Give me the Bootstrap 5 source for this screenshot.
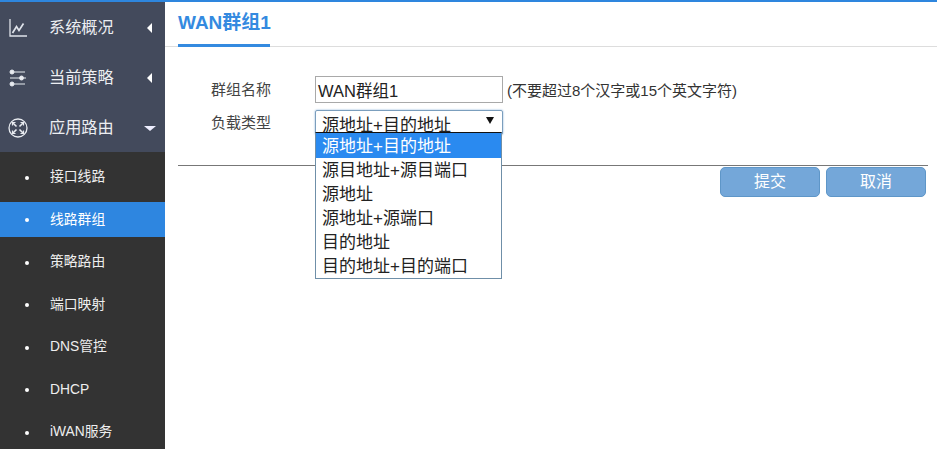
<!DOCTYPE html>
<html lang="zh-CN">
<head>
<meta charset="utf-8">
<title>WAN群组1</title>
<link rel="stylesheet" href="https://cdn.jsdelivr.net/npm/bootstrap@5.3.0/dist/css/bootstrap.min.css">
<style>
html,body{height:449px;overflow:hidden;background:#fff;}
body{font-family:"Liberation Sans","Noto Sans CJK SC",sans-serif;color:#333;}
.shell{height:449px;border-top:2px solid #2e86de;}
.side{width:165px;flex:none;background:#333;height:447px;overflow:hidden;}
.side-top{background:#434a5c;height:150px;padding-top:1px;}
.top-item{height:50px;color:#eceef2;font-size:16.2px;padding-left:8px;}
.top-ico{width:20px;height:20px;margin-right:21px;flex:none;}
.top-lab{flex:1;margin-top:-1px;}
.car-left{width:0;height:0;border-top:5px solid transparent;border-bottom:5px solid transparent;border-right:5px solid #fff;margin-right:13px;}
.car-down{width:0;height:0;border-left:6px solid transparent;border-right:6px solid transparent;border-top:5px solid #eef;margin-right:9px;}
.sub-list{padding-top:7px;}
.sub-item{height:35px;margin-bottom:7.5px;color:#eee;font-size:13.8px;padding-left:25px;padding-top:2px;}
.sub-on{background:#2e86e0;color:#fff;}
.dot{width:4px;height:4px;border-radius:50%;background:#fff;margin-right:21px;flex:none;}
.main-pane{min-width:0;}
.head-bar{height:45px;border-bottom:1px solid #ddd;padding-left:13px;}
.head-tab{height:45px;width:92px;color:#348ae0;font-size:19px;font-weight:700;border-bottom:3px solid #348ae0;padding-top:8px;line-height:26px;white-space:nowrap;}
.form-zone{padding:29px 0 0 46px;height:118px;position:relative;}
.f-row{height:27px;margin-bottom:7px;}
.f-lab{width:104px;color:#444;font-size:15px;flex:none;padding-top:2px;}
.f-input{width:188px;height:27px;border:1px solid #a9a9a9;padding:0 2px;font-size:16.5px;color:#222;line-height:29px;flex:none;overflow:hidden;}
.f-hint{margin-left:4px;font-size:15px;color:#333;padding-top:3px;}
.f-select{width:188px;height:25px;border:1px solid #7b9ebd;border-radius:2px;padding:0 6px;font-size:17px;color:#222;line-height:29px;overflow:hidden;box-shadow:0 0 2px #7ba7d6;flex:none;position:relative;}
.sel-arrow{position:absolute;right:8px;top:6px;width:0;height:0;border-left:4px solid transparent;border-right:4px solid transparent;border-top:7px solid #111;}
.drop{position:absolute;left:150px;top:85px;width:187px;background:#fff;border:1px solid #6f8fa8;border-top:1px solid #111;z-index:5;font-size:17px;color:#222;}
.drop-opt{height:24px;line-height:26px;padding-left:6px;overflow:hidden;}
.drop-on{background:#2a8af0;color:#fff;height:25px;line-height:27px;}
.rule-line{border-top:1px solid #777;margin:0 9px 0 13px;}
.btn-zone{padding:1px 11px 0 0;gap:6px;}
.act-btn{width:100px;height:30px;background:#74a7d9;border:1px solid #5e96c8;border-radius:5px;color:#fff;font-size:16px;padding:0;line-height:28px;}
.act-btn:hover{background:#74a7d9;border-color:#5e96c8;color:#fff;}
</style>
</head>
<body>
<div class="shell d-flex">
  <aside class="side">
    <div class="side-top">
      <div class="top-item d-flex align-items-center">
        <svg class="top-ico" viewBox="0 0 20 20" fill="none" stroke="#dfe3ea" stroke-width="1.3"><path d="M2 1V18H19"/><path d="M4.5 15L8.5 8.5L11 12.5L15.5 5.5" stroke-width="1.7"/></svg>
        <span class="top-lab">系统概况</span><span class="car-left"></span>
      </div>
      <div class="top-item d-flex align-items-center">
        <svg class="top-ico" viewBox="0 0 20 20" fill="#e8ebf0" stroke="#e8ebf0"><path d="M6 4H17M2 10H11M6 16H17" stroke-width="1.1" fill="none"/><circle cx="4" cy="4" r="2"/><circle cx="13.5" cy="10" r="2"/><circle cx="4" cy="16" r="2"/><path d="M16 10H18" stroke-width="1.1"/></svg>
        <span class="top-lab">当前策略</span><span class="car-left"></span>
      </div>
      <div class="top-item d-flex align-items-center">
        <svg class="top-ico" viewBox="0 0 20 20" fill="none" stroke="#e8ebf0"><circle cx="10" cy="10" r="9" stroke-width="1.3"/><path d="M5 5L8.5 8.5M15 5L11.5 8.5M5 15L8.5 11.5M15 15L11.5 11.5" stroke-width="1.6"/><path d="M4.5 7.5V4.5H7.5M12.5 4.5H15.5V7.5M4.5 12.5V15.5H7.5M12.5 15.5H15.5V12.5" stroke-width="1.2"/></svg>
        <span class="top-lab">应用路由</span><span class="car-down"></span>
      </div>
    </div>
    <div class="sub-list">
      <div class="sub-item d-flex align-items-center"><span class="dot"></span>接口线路</div>
      <div class="sub-item sub-on d-flex align-items-center"><span class="dot"></span>线路群组</div>
      <div class="sub-item d-flex align-items-center"><span class="dot"></span>策略路由</div>
      <div class="sub-item d-flex align-items-center"><span class="dot"></span>端口映射</div>
      <div class="sub-item d-flex align-items-center"><span class="dot"></span>DNS管控</div>
      <div class="sub-item d-flex align-items-center"><span class="dot"></span>DHCP</div>
      <div class="sub-item d-flex align-items-center"><span class="dot"></span>iWAN服务</div>
    </div>
  </aside>
  <main class="main-pane flex-grow-1">
    <div class="head-bar"><div class="head-tab">WAN群组1</div></div>
    <div class="form-zone">
      <div class="f-row d-flex align-items-center">
        <span class="f-lab">群组名称</span>
        <span class="f-input">WAN群组1</span>
        <span class="f-hint">(不要超过8个汉字或15个英文字符)</span>
      </div>
      <div class="f-row d-flex align-items-start">
        <span class="f-lab">负载类型</span>
        <span class="f-select">源地址+目的地址<i class="sel-arrow"></i></span>
      </div>
      <div class="drop">
        <div class="drop-opt drop-on">源地址+目的地址</div>
        <div class="drop-opt">源目地址+源目端口</div>
        <div class="drop-opt">源地址</div>
        <div class="drop-opt">源地址+源端口</div>
        <div class="drop-opt">目的地址</div>
        <div class="drop-opt">目的地址+目的端口</div>
      </div>
    </div>
    <div class="rule-line"></div>
    <div class="btn-zone d-flex justify-content-end">
      <button class="btn act-btn" type="button">提交</button>
      <button class="btn act-btn" type="button">取消</button>
    </div>
  </main>
</div>
</body>
</html>
